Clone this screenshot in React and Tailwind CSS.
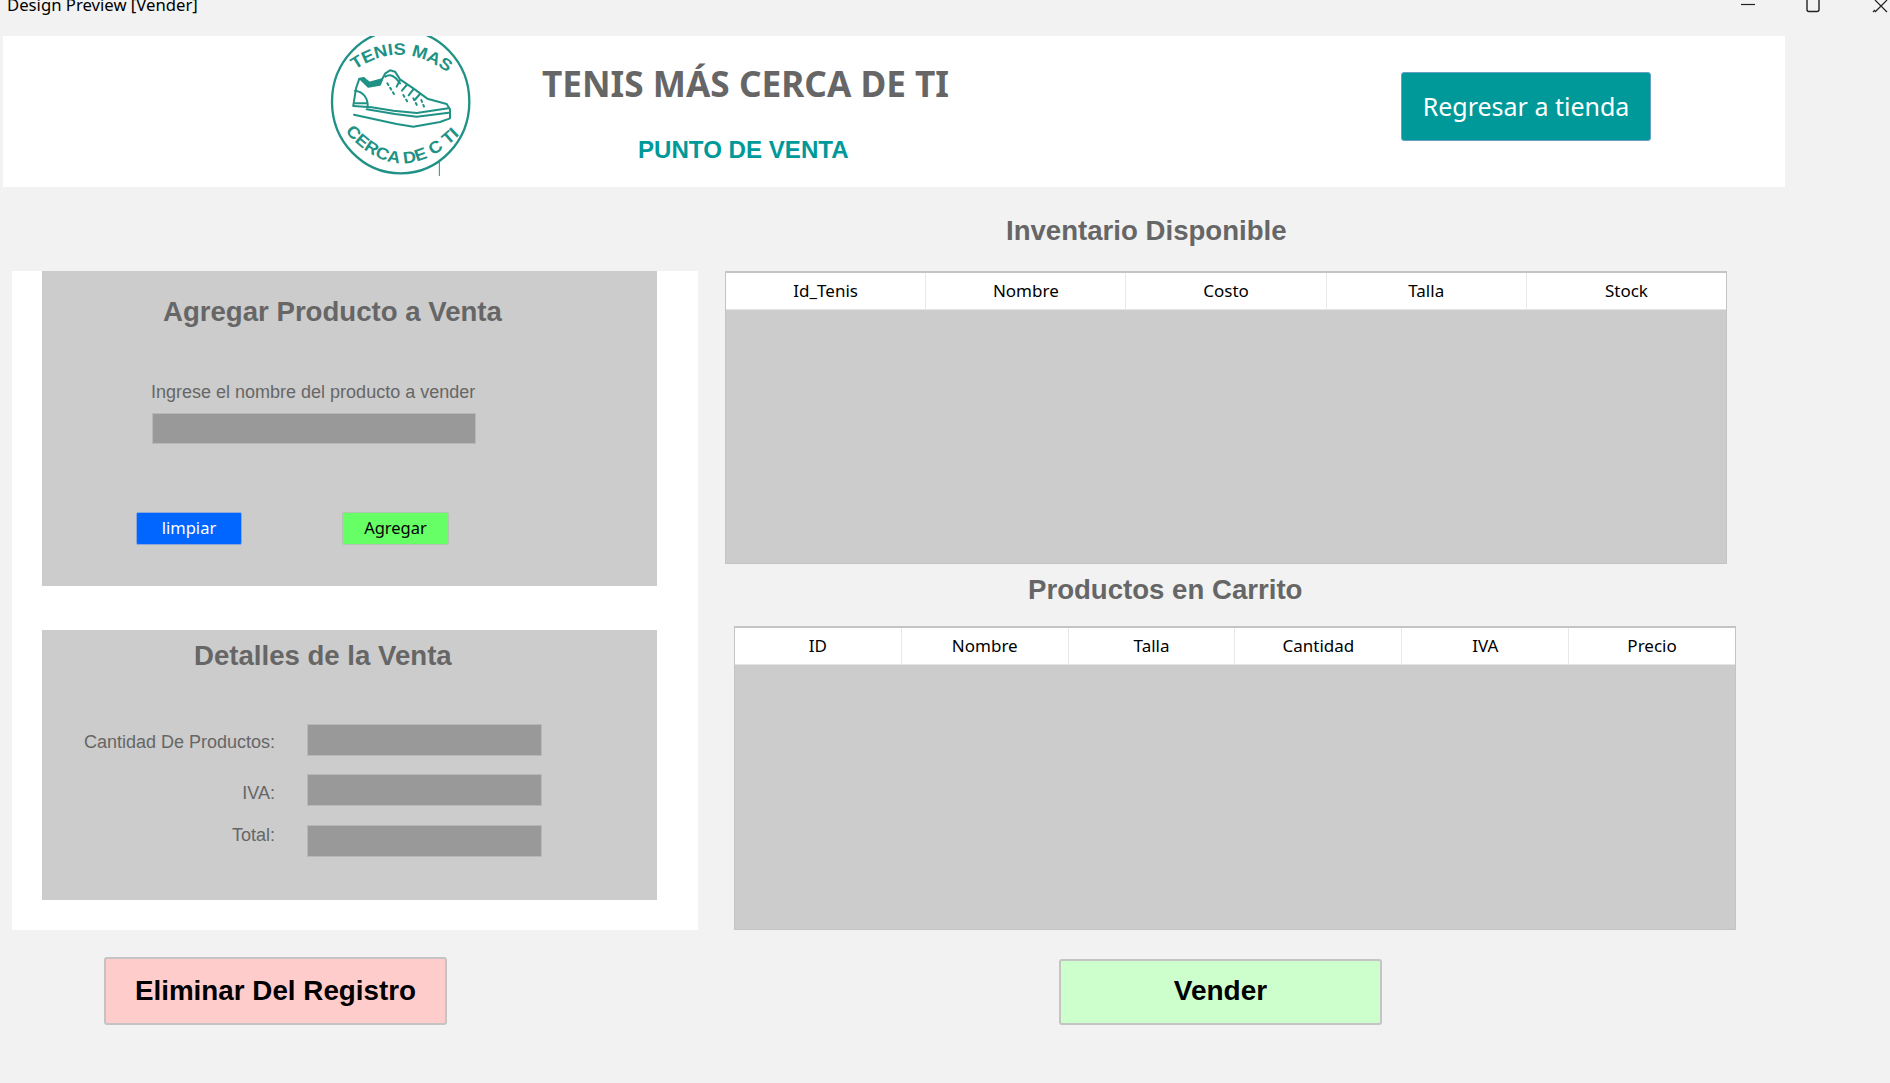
function Logo() {
    return (
        <svg className="ml-[297px] shrink-0" width="200" height="151" viewBox="0 48 600 453" fill="none">
            <defs>
                <path id="arcTop" d="M 165 150 Q 300 56 440 156" />
                <path id="arcBottom" d="M 135 335 Q 300 520 478 345" />
            </defs>
            <ellipse cx="302" cy="245" rx="206" ry="215" stroke="#1f9285" strokeWidth="7" />
            <text fontFamily="'Liberation Sans', sans-serif" fontWeight="700" fontSize="50" fill="#1f9285">
                <textPath href="#arcTop" textLength="300" lengthAdjust="spacingAndGlyphs">TENIS MAS</textPath>
            </text>
            <text fontFamily="'Liberation Sans', sans-serif" fontWeight="700" fontSize="50" fill="#1f9285">
                <textPath href="#arcBottom" textLength="400" lengthAdjust="spacingAndGlyphs">CERCA DE C TI</textPath>
            </text>
            <path d="M418 425 V468" stroke="#1f9285" strokeWidth="3" />
            <g stroke="#1f9285" strokeWidth="6" strokeLinejoin="round" strokeLinecap="round">
                <path d="M160 256 L168 205 L178 176 L192 174 L208 196 L240 190 L256 160 L270 151 L285 155 L300 178 L340 205 L382 236 L440 252 L450 268 V295 L420 306 L340 320 L290 312 L162 284" />
                <path d="M160 258 L215 262 L280 272 L350 279 L445 265" />
                <path d="M200 268 L285 282 L350 290 L446 278" />
                <path d="M165 212 C190 215 205 235 203 262" />
                <path d="M165 250 H200" />
                <path d="M182 178 L205 200 L240 194 L246 178 L208 188 L192 176 Z" fill="#1f9285" />
                <path d="M256 170 C270 160 285 168 300 190" />
                <path d="M262 190 L282 222 M310 225 L322 245 M340 235 L352 258 M364 240 L372 260" strokeDasharray="6 10" />
                <path d="M300 180 L290 200 M320 195 L306 212 M340 208 L326 226 M360 222 L344 240" />
            </g>
        </svg>
    );
}

function DataTable({ columns, className }) {
    return (
        <div className={`flex flex-col border border-[#c4c4c4] border-t-2 bg-[#cccccc] ${className}`}>
            <div className="flex h-[37px] bg-white border-b border-[#e4e4e4]">
                {columns.map((c) => (
                    <div
                        key={c}
                        className="flex-1 flex items-center justify-center border-r border-[#e8e8e8] last:border-r-0 font-['Noto_Sans',sans-serif] text-[17px] text-black"
                    >
                        {c}
                    </div>
                ))}
            </div>
        </div>
    );
}

function Heading({ children, className }) {
    return (
        <h2 className={`font-['Liberation_Sans',sans-serif] font-bold text-[27.6px] leading-[32px] text-[#666666] whitespace-nowrap ${className}`}>
            {children}
        </h2>
    );
}

function Field({ label, labelClass }) {
    return (
        <div className="flex items-center">
            <span className={`w-[233px] text-right font-['Liberation_Sans',sans-serif] text-[18px] leading-[22px] text-[#666666] ${labelClass}`}>
                {label}
            </span>
            <div className="ml-[32px] w-[235px] h-[32px] bg-[#999999] border border-[#b8b8b8]"></div>
        </div>
    );
}

export default function App() {
    return (
        <div className="w-[1890px] h-[1083px] overflow-hidden bg-[#f2f2f2]">
            <div className="h-[36px] flex items-start overflow-hidden">
                <span className="ml-[7px] -mt-[6px] font-['Noto_Sans',sans-serif] text-[16.7px] leading-[22px] text-black">
                    Design Preview [Vender]
                </span>
                <div className="ml-auto mr-[2px] flex items-start">
                    <svg width="16" height="13" fill="none" stroke="#222" strokeWidth="1.2">
                        <path d="M1 4.5 H15" />
                    </svg>
                    <svg className="ml-[49px]" width="16" height="13" fill="none" stroke="#222" strokeWidth="1.4">
                        <path d="M2 0 V9.5 Q2 11.5 4 11.5 H12 Q14 11.5 14 9.5 V0" />
                    </svg>
                    <svg className="ml-[51px]" width="16" height="13" fill="none" stroke="#222" strokeWidth="1.2">
                        <path d="M3 0 L15 12 M15 0 L3 12 M1 12 L3 10" />
                    </svg>
                </div>
            </div>

            <header className="ml-[3px] w-[1782px] h-[151px] bg-white overflow-hidden flex items-start">
                <Logo />
                <div className="ml-[42px] w-[420px] shrink-0">
                    <h1 className="mt-[23px] font-['Noto_Sans',sans-serif] font-bold text-[35.2px] leading-[48px] text-[#666666] whitespace-nowrap">
                        TENIS MÁS CERCA DE TI
                    </h1>
                    <p className="mt-[29px] ml-[96px] font-['Liberation_Sans',sans-serif] font-bold text-[24.1px] leading-[28px] text-[#009999] whitespace-nowrap">
                        PUNTO DE VENTA
                    </p>
                </div>
                <button className="ml-[439px] mt-[36px] w-[250px] h-[69px] rounded-[3px] bg-[#009999] border border-[#6a9fc4] font-['Noto_Sans',sans-serif] text-[25px] text-white whitespace-nowrap">
                    Regresar a tienda
                </button>
            </header>

            <main className="flex items-start">
                <div className="ml-[12px] w-[686px] mt-[84px] shrink-0">
                    <div className="bg-white pl-[30px] pb-[30px] w-full">
                        <section className="w-[615px] h-[315px] bg-[#cccccc] flex flex-col items-start">
                            <Heading className="mt-[25px] ml-[121px]">Agregar Producto a Venta</Heading>
                            <label className="mt-[53px] ml-[109px] font-['Liberation_Sans',sans-serif] text-[18px] leading-[22px] text-[#666666]">
                                Ingrese el nombre del producto a vender
                            </label>
                            <div className="mt-[10px] ml-[110px] w-[324px] h-[31px] bg-[#999999] border border-[#b8b8b8]"></div>
                            <div className="mt-[68px] ml-[94px] flex">
                                <button className="w-[106px] h-[33px] rounded-[2px] bg-[#0066ff] border border-[#8aa8dc] font-['Noto_Sans',sans-serif] text-[16.5px] text-white">
                                    limpiar
                                </button>
                                <button className="ml-[100px] w-[107px] h-[33px] rounded-[2px] bg-[#66ff66] border border-[#b4c4b4] font-['Noto_Sans',sans-serif] text-[16.5px] text-black">
                                    Agregar
                                </button>
                            </div>
                        </section>
                        <section className="mt-[44px] w-[615px] h-[270px] bg-[#cccccc] flex flex-col items-start">
                            <Heading className="mt-[10px] ml-[152px]">Detalles de la Venta</Heading>
                            <div className="mt-[52px] flex flex-col">
                                <Field label="Cantidad De Productos:" labelClass="mt-[3px]" />
                                <div className="mt-[18px]">
                                    <Field label="IVA:" labelClass="mt-[5px]" />
                                </div>
                                <div className="mt-[18px]">
                                    <Field label="Total:" labelClass="mb-[11px]" />
                                </div>
                            </div>
                        </section>
                    </div>
                    <button className="mt-[27px] ml-[92px] w-[343px] h-[68px] rounded-[3px] bg-[#ffcccc] border-2 border-[#c4c4c4] font-['Liberation_Sans',sans-serif] font-bold text-[27.8px] text-black">
                        Eliminar Del Registro
                    </button>
                </div>

                <div className="ml-[27px] w-[1020px] pt-[28px] shrink-0">
                    <Heading className="ml-[281px]">Inventario Disponible</Heading>
                    <DataTable
                        className="mt-[24px] w-[1002px] h-[293px]"
                        columns={["Id_Tenis", "Nombre", "Costo", "Talla", "Stock"]}
                    />
                    <Heading className="mt-[10px] ml-[303px]">Productos en Carrito</Heading>
                    <DataTable
                        className="mt-[20px] ml-[9px] w-[1002px] h-[304px]"
                        columns={["ID", "Nombre", "Talla", "Cantidad", "IVA", "Precio"]}
                    />
                    <button className="mt-[29px] ml-[334px] w-[323px] h-[66px] pb-[2px] rounded-[3px] bg-[#ccffcc] border-2 border-[#c4c4c4] font-['Liberation_Sans',sans-serif] font-bold text-[28px] text-black">
                        Vender
                    </button>
                </div>
            </main>
        </div>
    );
}
